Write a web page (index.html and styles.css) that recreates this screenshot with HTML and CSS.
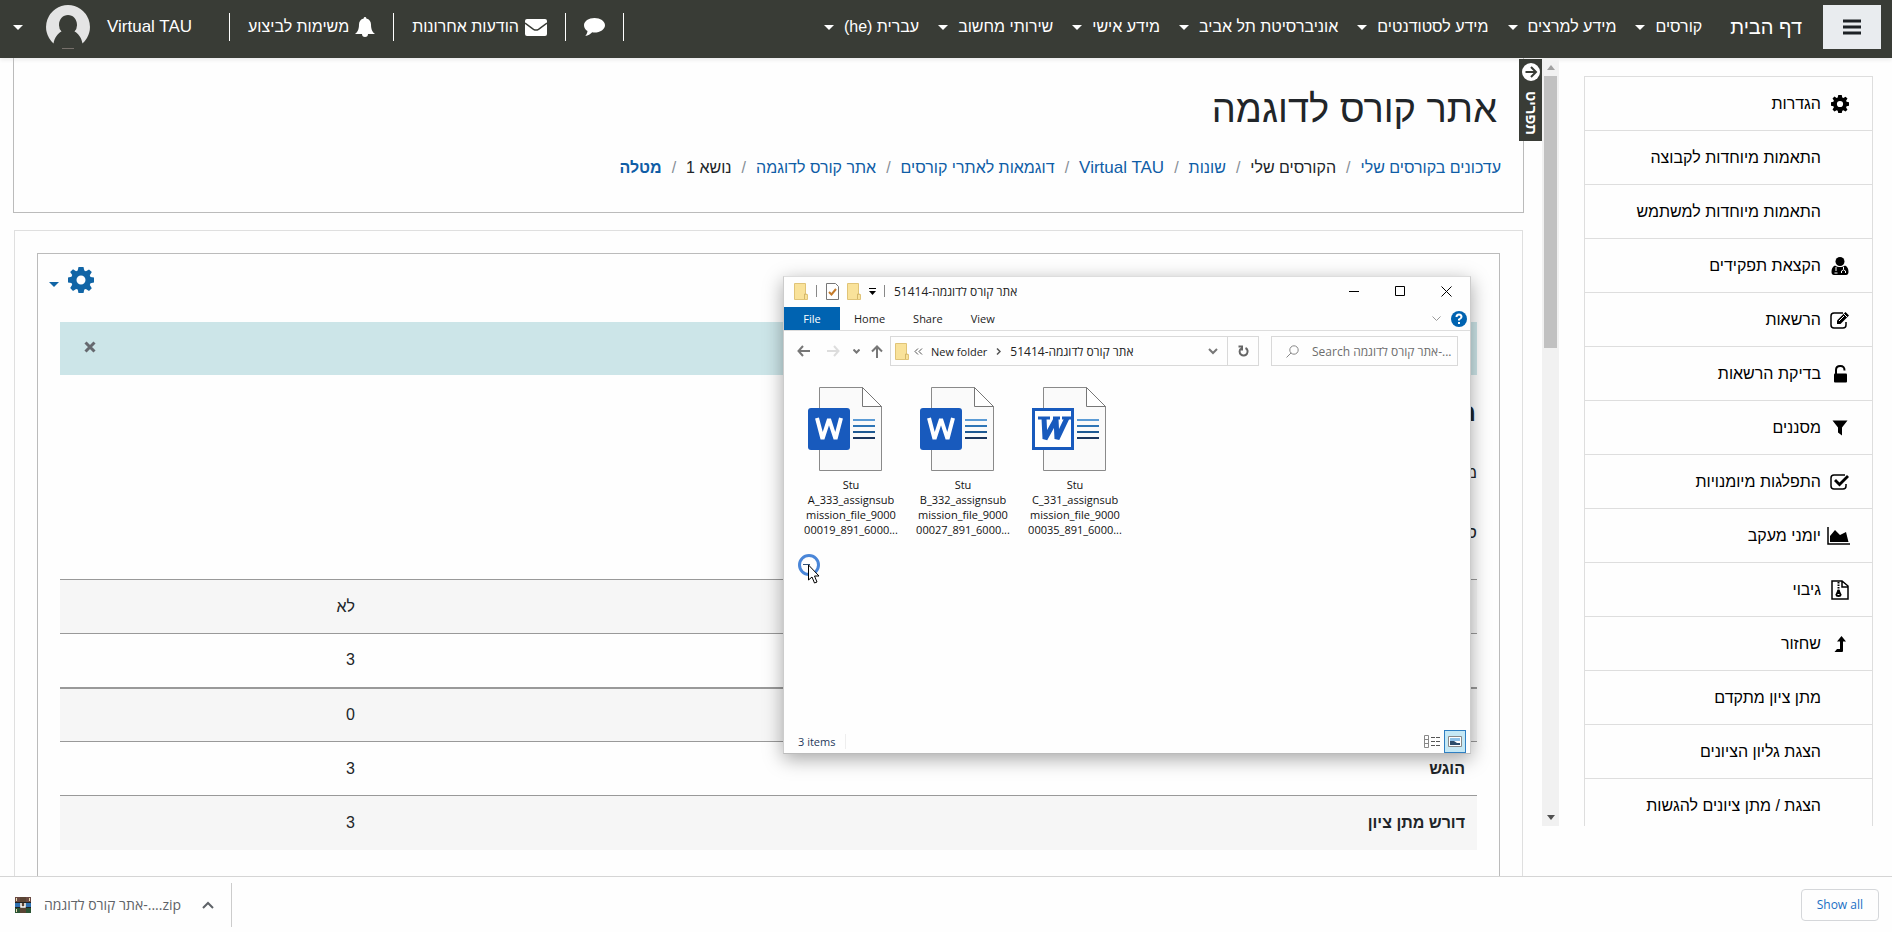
FILE: index.html
```
<!DOCTYPE html>
<html lang="he" dir="rtl">
<head>
    <meta charset="UTF-8">
    <meta name="viewport" content="width=device-width, initial-scale=1.0">
    <title>אתר קורס לדוגמה</title>
    <link rel="stylesheet" href="styles.css">
</head>
<body>
    <!-- Shared icons -->
    <svg class="sprite" aria-hidden="true">
        <symbol id="gear" viewBox="0 0 26 26">
            <path fill="currentColor" fill-rule="evenodd" d="M10.500 0h5l.8 3.600 1.600.7L21 2.400 23.800 5l-2 3.200.7 1.700 3.500.7v5l-3.500.7-.7 1.700 2 3.200-2.800 2.700-3.100-2-1.600.7-.8 3.600h-5l-.8-3.600-1.600-.7-3.100 2L2.200 21l2-3.200-.7-1.700L0 15.500v-5l3.500-.7.7-1.700-2-3.200L5 2.300l3.100 2 1.600-.7zM13 8.500a4.500 4.500 0 1 0 0 9 4.500 4.500 0 0 0 0-9z"/>
        </symbol>
        <symbol id="folder" viewBox="0 0 14 17">
            <path fill="#f9e29a" stroke="#e0c478" d="M.5.5h11v11h2v5H.5z"/>
            <path fill="none" stroke="#d4b76a" d="M10.500 16v-5h2"/>
        </symbol>
        <symbol id="word" viewBox="0 0 74 84">
            <path fill="#fafafa" stroke="#8a8a8a" d="M11.500.5h43l19 19v64h-62z"/>
            <path fill="#fff" stroke="#777" d="M54.500.5v19h19z"/>
            <path stroke="#5b9bd5" stroke-width="2" d="M45 33h22"/>
            <path stroke="#2e75b6" stroke-width="2" d="M45 39h22"/>
            <path stroke="#1f5a93" stroke-width="2" d="M45 45h22"/>
            <path stroke="#1b365d" stroke-width="2" d="M45 51h22"/>
        </symbol>
    </svg>

    <header class="navbar">
        <button class="menu-button" aria-label="תפריט צד">
            <svg width="18" height="16" viewBox="0 0 18 16"><path stroke="#1d2125" stroke-width="3" d="M0 2h18M0 8h18M0 14h18"/></svg>
        </button>
        <a class="home-link" href="#">דף הבית</a>
        <nav class="nav-links">
            <a href="#">קורסים</a>
            <a href="#">מידע למרצים</a>
            <a href="#">מידע לסטודנטים</a>
            <a href="#">אוניברסיטת תל אביב</a>
            <a href="#">מידע אישי</a>
            <a href="#">שירותי מחשוב</a>
            <a href="#">עברית (he)</a>
        </nav>
        <div class="user-tools">
            <a class="tool" href="#" aria-label="שיחות">
                <svg width="21" height="20" viewBox="0 0 21 18"><path fill="#fff" d="M10.500 0C16.300 0 21 3.200 21 7.200s-4.700 7.300-10.500 7.300c-.8 0-1.600 0-2.300-.2C6.500 16.200 4 17.600 1.300 18c1.400-1.500 2-3 2.200-4.900C1.300 11.700 0 9.600 0 7.200 0 3.200 4.700 0 10.500 0z"/></svg>
            </a>
            <a class="tool" href="#">
                <svg width="22" height="17" viewBox="0 0 22 17"><rect width="22" height="17" rx="2" fill="#fff"/><path fill="none" stroke="#393c36" stroke-width="1.500" d="M0 4l8.500 6.300q2.500 1.600 5 0L22 4"/></svg>
                הודעות אחרונות
            </a>
            <a class="tool" href="#">
                <svg width="20" height="20" viewBox="0 0 20 20"><path fill="#fff" d="M10 0c.8 0 1.300.6 1.300 1.400C14.500 2 16 4.600 16 7.500c0 5 1.500 7.500 4 9.500h-7a3 3 0 0 1-6 0H0c2.500-2 4-4.500 4-9.500 0-2.900 1.500-5.500 4.700-6.100C8.700.6 9.200 0 10 0z"/></svg>
                משימות לביצוע
            </a>
            <a class="user" href="#">
                <span class="latin">Virtual TAU</span>
                <svg width="44" height="44" viewBox="0 0 44 44">
                    <path fill="#e4e4e4" d="M22 0a22 22 0 0 1 14.500 38.500C35.500 33 32.500 28.500 28.500 26.500A9 9 0 0 0 31 20c0-6-4-10-9-10s-9 4-9 10a9 9 0 0 0 2.500 6.500c-4 2-7 6.500-8 12A22 22 0 0 1 22 0z"/>
                    <path stroke="#77706b" d="M16 43.500h12"/>
                </svg>
            </a>
        </div>
    </header>

    <div class="page">
        <aside class="sidebar">
            <ul class="side-list">
                <li><a href="#"><svg class="icon" viewBox="0 0 26 26"><use href="#gear"/></svg>הגדרות</a></li>
                <li><a href="#"><span class="icon"></span>התאמות מיוחדות לקבוצה</a></li>
                <li><a href="#"><span class="icon"></span>התאמות מיוחדות למשתמש</a></li>
                <li><a href="#"><svg class="icon" viewBox="0 0 18 18"><circle cx="9" cy="4.500" r="4.500"/><path d="M4 8.500C1.500 9.500.5 12 .5 15c0 2 1 3 2.500 3h12c1.500 0 2.500-1 2.500-3 0-3-1-5.500-3.500-6.500-3 2-7 2-10 0z"/><path fill="none" stroke="#fff" d="M5 10v4M3.500 16h3M12.500 10v2.500m-2 3.500v-2q2-2.500 4 0v2"/></svg>הקצאת תפקידים</a></li>
                <li><a href="#"><svg class="icon" viewBox="0 0 20 18"><path fill="none" stroke="#000" stroke-width="1.500" d="M13 2H4Q1 2 1 5v9q0 3 3 3h9q3 0 3-3v-3"/><path d="M7 13v-3.500L15.500 1 19 4.500 10.500 13z"/><path stroke="#fff" d="M14 3l3.500 3.500M9 10l5-5"/></svg>הרשאות</a></li>
                <li><a href="#"><svg class="icon" viewBox="0 0 18 18"><rect x="3" y="8.500" width="13" height="9" rx="1"/><path fill="none" stroke="#000" stroke-width="2" d="M5 9V5q0-4 4.300-4t4.200 4.500"/></svg>בדיקת הרשאות</a></li>
                <li><a href="#"><svg class="icon" viewBox="0 0 18 18"><path d="M1.500 1.500h15L11 8.500v8l-4-3v-5z"/></svg>מסננים</a></li>
                <li><a href="#"><svg class="icon" viewBox="0 0 20 18"><path fill="none" stroke="#000" stroke-width="1.500" d="M15 2H4Q1 2 1 5v8q0 3 3 3h9q3 0 3-3v-2"/><path d="M4 8l2-2 3.500 3.500 7.500-7.500 2 2-9.500 9.500z"/></svg>התפלגות מיומנויות</a></li>
                <li><a href="#"><svg class="icon wide" viewBox="0 0 23 18"><path fill="none" stroke="#000" stroke-width="1.500" d="M1 0v17h22"/><path d="M3 15V9l5-6 5 5 6-3 2.500 10z"/></svg>יומני מעקב</a></li>
                <li><a href="#"><svg class="icon tall" viewBox="0 0 18 20"><path fill="none" stroke="#000" stroke-width="1.500" d="M1 1h10l6 5v13H1zM11 1v6h6"/><path fill="none" stroke="#000" stroke-width="2" stroke-dasharray="1.500 1" d="M7.500 2v9"/><path d="M6.500 10h2l2 4.500q0 2.500-3 2.500t-3-2.500z"/><path stroke="#fff" d="M6.500 14.500h2"/></svg>גיבוי</a></li>
                <li><a href="#"><svg class="icon" viewBox="0 0 18 18"><path d="M10.500 1l4.500 5.500h-3V16q0 1-1 1H3.500l2.500-3h3V6.500H6z"/></svg>שחזור</a></li>
                <li><a href="#"><span class="icon"></span>מתן ציון מתקדם</a></li>
                <li><a href="#"><span class="icon"></span>הצגת גליון הציונים</a></li>
                <li><a href="#"><span class="icon"></span>הצגת / מתן ציונים להגשות</a></li>
            </ul>
            <div class="scrollbar">
                <svg width="8" height="5" viewBox="0 0 8 5"><path fill="#a0a0a0" d="M0 5l4-5 4 5z"/></svg>
                <div class="thumb"></div>
                <svg width="8" height="5" viewBox="0 0 8 5"><path fill="#505050" d="M0 0l4 5 4-5z"/></svg>
            </div>
            <button class="drawer-tab">
                <svg width="18" height="18" viewBox="0 0 18 18"><circle cx="9" cy="9" r="9" fill="#fff"/><path fill="none" stroke="#393c36" stroke-width="2" d="M3.500 9h10M9 4l5 5-5 5"/></svg>
                <span>תפריט</span>
            </button>
        </aside>

        <main class="content">
            <section class="course-header">
                <h1>אתר קורס לדוגמה</h1>
                <ol class="breadcrumb">
                    <li><a href="#">עדכונים בקורסים שלי</a></li>
                    <li>הקורסים שלי</li>
                    <li><a href="#">שונות</a></li>
                    <li><a class="latin" href="#">Virtual TAU</a></li>
                    <li><a href="#">דוגמאות לאתרי קורסים</a></li>
                    <li><a href="#">אתר קורס לדוגמה</a></li>
                    <li>נושא 1</li>
                    <li class="current"><a href="#">מטלה</a></li>
                </ol>
            </section>

            <section class="course-body">
                <div class="activity">
                    <button class="settings-button" aria-label="פעולות">
                        <svg width="26" height="26"><use href="#gear"/></svg>
                    </button>
                    <div class="alert">
                        <button class="alert-close" aria-label="סגירה">
                            <svg width="12" height="12" viewBox="0 0 12 12"><path stroke="#66696f" stroke-width="3" d="M1.500 1.500l9 9M10.500 1.500l-9 9"/></svg>
                        </button>
                    </div>
                    <h2>מטלה</h2>
                    <p>מטלה לדוגמה</p>
                    <h3>סיכום מתן הציונים</h3>
                    <table class="summary">
                        <tbody>
                            <tr><th scope="row">מוסתר מסטודנטים</th><td>לא</td></tr>
                            <tr class="group-end"><th scope="row">משתתפים</th><td>3</td></tr>
                            <tr><th scope="row">טיוטות</th><td>0</td></tr>
                            <tr><th scope="row">הוגש</th><td>3</td></tr>
                            <tr><th scope="row">דורש מתן ציון</th><td>3</td></tr>
                        </tbody>
                    </table>
                </div>
            </section>
        </main>
    </div>

    <!-- File explorer window over the page -->
    <section class="explorer" dir="ltr">
        <div class="title-bar">
            <svg width="14" height="17"><use href="#folder"/></svg>
            <span class="divider"></span>
            <svg width="13" height="17" viewBox="0 0 13 17"><path fill="#fff" stroke="#777" d="M.5.5h9l3 3v13H.5z"/><path fill="none" stroke="#c47b2b" stroke-width="2" d="M3 9l2.500 2.500L10 6"/></svg>
            <svg width="14" height="17"><use href="#folder"/></svg>
            <svg width="7" height="7" viewBox="0 0 7 7"><path d="M0 0h7v1H0zM0 3h7L3.500 7z"/></svg>
            <span class="divider"></span>
            <span class="window-title">51414-אתר קורס לדוגמה</span>
            <div class="window-buttons">
                <button aria-label="Minimize"><svg width="11" height="11"><path stroke="#000" d="M0 5.500h10"/></svg></button>
                <button aria-label="Maximize"><svg width="11" height="11"><path fill="none" stroke="#000" d="M.5.5h9v9h-9z"/></svg></button>
                <button aria-label="Close"><svg width="11" height="11"><path stroke="#000" d="M.5.5l10 10M10.500.5l-10 10"/></svg></button>
            </div>
        </div>
        <div class="ribbon">
            <button class="file-tab">File</button>
            <button>Home</button>
            <button>Share</button>
            <button>View</button>
            <svg class="ribbon-toggle" width="9" height="6" viewBox="0 0 9 6"><path fill="none" stroke="#999" d="M.5.5l4 4 4-4"/></svg>
            <svg width="16" height="16" viewBox="0 0 16 16"><circle cx="8" cy="8" r="8" fill="#0063b1"/><path fill="none" stroke="#fff" stroke-width="2" d="M5.500 6q0-2.500 2.500-2.500T10.500 6Q10.500 7 8 8.500v1M8 11v2"/></svg>
        </div>
        <div class="address-row">
            <button aria-label="Back"><svg width="13" height="12" viewBox="0 0 13 12"><path fill="none" stroke="#777" stroke-width="2" d="M13 6H1.500M6 1L1.500 6 6 11"/></svg></button>
            <button class="forward" aria-label="Forward"><svg width="13" height="12" viewBox="0 0 13 12"><path fill="none" stroke="#ddd" stroke-width="2" d="M0 6h11.500M7 1l4.500 5L7 11"/></svg></button>
            <button class="recent" aria-label="Recent locations"><svg width="7" height="5" viewBox="0 0 7 5"><path fill="none" stroke="#777" stroke-width="2" d="M.5.5l3 3 3-3"/></svg></button>
            <button class="up" aria-label="Up"><svg width="12" height="13" viewBox="0 0 12 13"><path fill="none" stroke="#777" stroke-width="2" d="M6 13V1.500M1 6.500l5-5 5 5"/></svg></button>
            <div class="address">
                <svg width="14" height="17"><use href="#folder"/></svg>
                <svg class="back-crumbs" width="9" height="7" viewBox="0 0 9 7"><path fill="none" stroke="#555" d="M4 .5l-3 3 3 3M8 .5l-3 3 3 3"/></svg>
                <span class="crumb">New folder</span>
                <svg class="crumb-arrow" width="5" height="7" viewBox="0 0 5 7"><path fill="none" stroke="#555" stroke-width="1.500" d="M1 .5l3 3-3 3"/></svg>
                <span>51414-אתר קורס לדוגמה</span>
                <svg class="address-open" width="10" height="7" viewBox="0 0 10 7"><path fill="none" stroke="#777" stroke-width="2" d="M1 1l4 4 4-4"/></svg>
            </div>
            <button class="refresh" aria-label="Refresh"><svg width="11" height="12" viewBox="0 0 11 12"><path fill="none" stroke="#666" stroke-width="2" d="M7.500 3a4 4 0 1 1-4.500.5M.5 1.500H4v4"/></svg></button>
            <label class="search">
                <svg width="13" height="13" viewBox="0 0 13 13"><circle cx="8" cy="5" r="4.200" fill="none" stroke="#888"/><path stroke="#888" d="M5 8l-4.500 4.500"/></svg>
                <input type="text" aria-label="Search" placeholder="Search אתר קורס לדוגמה-...">
            </label>
        </div>
        <div class="files">
            <figure class="file">
                <svg width="74" height="84" viewBox="0 0 74 84"><use href="#word"/><rect y="21" width="42" height="42" rx="3" fill="#185abd"/><path fill="none" stroke="#fff" stroke-width="4" stroke-linejoin="bevel" d="M9 31l5.500 21L21 32l6.500 20L33 31"/></svg>
                <figcaption>Stu<br>A_333_assignsub<br>mission_file_9000<br>00019_891_6000...</figcaption>
            </figure>
            <figure class="file">
                <svg width="74" height="84" viewBox="0 0 74 84"><use href="#word"/><rect y="21" width="42" height="42" rx="3" fill="#185abd"/><path fill="none" stroke="#fff" stroke-width="4" stroke-linejoin="bevel" d="M9 31l5.500 21L21 32l6.500 20L33 31"/></svg>
                <figcaption>Stu<br>B_332_assignsub<br>mission_file_9000<br>00027_891_6000...</figcaption>
            </figure>
            <figure class="file">
                <svg width="74" height="84" viewBox="0 0 74 84"><use href="#word"/><path fill="#fff" stroke="#185abd" stroke-width="3" d="M1.500 22.500h39v39h-39z"/><path fill="none" stroke="#185abd" stroke-width="5" stroke-linejoin="bevel" d="M12 31l1 21 11-20 1 20 10-21"/><path stroke="#185abd" stroke-width="3" d="M6 31h12M21 31h7M30 31h9"/></svg>
                <figcaption>Stu<br>C_331_assignsub<br>mission_file_9000<br>00035_891_6000...</figcaption>
            </figure>
        </div>
        <div class="status-bar">
            <span class="item-count">3 items</span>
            <button class="view-details" aria-label="Details view">
                <svg width="17" height="13" viewBox="0 0 17 13"><path fill="none" stroke="#888" d="M.5.5h4v12h-4zM.5 4.500h4M.5 8.500h4"/><path stroke="#555" stroke-dasharray="4 1" d="M7 2.500h10M7 6.500h10M7 10.500h10"/></svg>
            </button>
            <button class="view-icons" aria-label="Large icons view">
                <svg width="14" height="11" viewBox="0 0 14 11"><path fill="#fff" stroke="#888" d="M.5.5h13v10H.5z"/><path fill="#8ec1e8" d="M2 2h10v3H2z"/><path fill="#2d4d6b" d="M2 5h4l3 2h3v2H2z"/></svg>
            </button>
        </div>
        <svg class="cursor" width="24" height="32" viewBox="0 0 24 32">
            <circle cx="11" cy="11" r="9.500" fill="none" stroke="#4a86d8" stroke-width="3"/>
            <path stroke="#35547a" d="M5 10.500h7"/>
            <path fill="#fff" stroke="#000" d="M10.500 11v15l3.500-3 2.500 6 2.500-1-2.500-6H21z"/>
        </svg>
    </section>

    <footer class="downloads" dir="ltr">
        <button class="download-item">
            <svg width="16" height="16" viewBox="0 0 16 16">
                <path fill="#6b4a42" d="M0 0h16v5H0z"/><path fill="#2f72b3" d="M0 5h16v5H0z"/><path fill="#2b5434" d="M0 10h16v6H0z"/>
                <path fill="#5a4434" d="M5 0h6v16H5z"/><path fill="#222" d="M0 5h16v1H0zM0 10h16v1H0z"/><path fill="#e8d9b0" d="M1 1h1v3H1zM14 1h1v3h-1zM1 12h1v3H1z"/><path fill="none" stroke="#fff" stroke-width="1.500" d="M6 6v4h4V6"/>
            </svg>
            <span>אתר קורס לדוגמה-....zip</span>
            <svg class="download-menu" width="12" height="8" viewBox="0 0 12 8"><path fill="none" stroke="#5f6368" stroke-width="2" d="M1 7l5-5 5 5"/></svg>
        </button>
        <button class="show-all">Show all</button>
    </footer>
</body>
</html>
```
FILE: styles.css
```
* {
    box-sizing: border-box;
}

body {
    display: flex;
    flex-direction: column;
    height: 100vh;
    margin: 0;
    overflow: hidden;
    background-color: #fefefe;
    color: #212529;
    font-family: "Liberation Sans", Arial, sans-serif;
    font-size: 16px;
}

a {
    color: #0f5da6;
    text-decoration: none;
}

button {
    margin: 0;
    padding: 0;
    border: none;
    background: none;
    color: inherit;
    font: inherit;
    cursor: pointer;
}

svg {
    flex: none;
    display: block;
}

.sprite {
    position: absolute;
    width: 0;
    height: 0;
}

.latin {
    font-size: 17px;
}

/* Top bar */
.navbar {
    display: flex;
    flex: none;
    align-items: center;
    height: 58px;
    padding: 0 11px 4px 13px;
    background-color: #393c36;
    box-shadow: 0 2px 4px rgba(0, 0, 0, 0.08);
}

.navbar a {
    color: #fff;
    white-space: nowrap;
}

.menu-button {
    display: flex;
    align-items: center;
    justify-content: center;
    width: 58px;
    height: 44px;
    background-color: #e9ecef;
}

.home-link {
    margin-right: 21px;
    font-size: 20px;
}

.nav-links {
    display: flex;
    gap: 19px;
    margin-right: 28px;
}

.nav-links a {
    display: flex;
    align-items: center;
    gap: 10px;
}

.nav-links a::after,
.user::after,
.settings-button::after {
    content: "";
    border: 5px solid transparent;
    border-top-color: currentColor;
    border-bottom: none;
}

.user-tools {
    display: flex;
    align-items: center;
    margin-right: auto;
}

.tool {
    display: flex;
    align-items: center;
    gap: 6px;
    height: 28px;
    padding: 0 18px;
    border-right: 1px solid #fff;
}

.user {
    display: flex;
    align-items: center;
    gap: 17px;
    height: 28px;
    padding-right: 37px;
    border-right: 1px solid #fff;
}

.user::after {
    margin-right: 6px;
}

/* Page */
.page {
    display: flex;
    flex: 1;
    min-height: 0;
}

.sidebar {
    position: relative;
    display: flex;
    flex: none;
    align-items: stretch;
    width: 350px;
    margin-bottom: 50px;
}

.side-list {
    flex: 1;
    margin: 18px 19px 0 25px;
    padding: 0;
    overflow: hidden;
    border: 1px solid #dedede;
    border-bottom: none;
    list-style: none;
}

.side-list a {
    display: flex;
    align-items: center;
    gap: 9px;
    height: 54px;
    padding: 0 22px;
    border-bottom: 1px solid #dedede;
    color: #000;
}

.icon {
    flex: none;
    width: 20px;
    height: 18px;
}

.icon.wide {
    width: 23px;
    margin-left: -3px;
}

.icon.tall {
    height: 20px;
}

.scrollbar {
    display: flex;
    flex-direction: column;
    align-items: center;
    width: 17px;
    margin-top: 1px;
    padding: 6px 0;
    background-color: #f1f1f1;
}

.scrollbar svg:last-child {
    margin-top: auto;
}

.thumb {
    width: 13px;
    height: 36%;
    margin-top: 6px;
    background-color: #c1c1c1;
}

.drawer-tab {
    position: absolute;
    top: 1px;
    left: -23px;
    z-index: 2;
    display: flex;
    flex-direction: column;
    align-items: center;
    gap: 10px;
    width: 23px;
    height: 82px;
    padding-top: 4px;
    background-color: #393c36;
    color: #fff;
    font-size: 15px;
    font-weight: 700;
    line-height: 18px;
}

.drawer-tab span {
    writing-mode: vertical-rl;
    direction: ltr;
}

.content {
    display: flex;
    flex: 1;
    flex-direction: column;
    min-width: 0;
    padding: 0 18px 0 13px;
}

.course-header {
    flex: none;
    height: 155px;
    padding: 24px 22px 0;
    border: 1px solid #bbb;
    border-top: none;
}

h1 {
    margin: 0 4px 0 0;
    font-size: 38px;
    font-weight: 400;
    line-height: 54px;
}

.breadcrumb {
    display: flex;
    margin: 19px 0 0;
    padding: 0;
    line-height: 26px;
    list-style: none;
}

.breadcrumb li + li::before {
    content: "/";
    padding: 0 10px;
    color: #868e96;
    font-weight: 400;
}

.current {
    font-weight: 700;
}

.course-body {
    flex: 1;
    min-height: 0;
    margin: 17px 1px 0;
    padding: 22px 22px 0;
    overflow: hidden;
    border: 1px solid #dfdfdf;
    border-bottom: none;
}

.activity {
    height: 100%;
    padding: 13px 22px 0;
    border: 1px solid #bbb;
    border-bottom: none;
}

.settings-button {
    display: flex;
    align-items: center;
    gap: 9px;
    margin: 0 auto 29px -11px;
    color: #1165a6;
}

.settings-button::after {
    margin-top: 8px;
}

.alert {
    display: flex;
    align-items: center;
    justify-content: flex-end;
    height: 53px;
    padding: 0 24px;
    background-color: #cce5e8;
}

.alert-close {
    margin-bottom: 4px;
}

h2 {
    margin: 21px 1px 0;
    font-size: 25px;
    font-weight: 700;
    line-height: 32px;
}

.activity p {
    margin: 32px 0 0;
    line-height: 26px;
}

h3 {
    margin: 34px 0 33px;
    font-size: 17px;
    font-weight: 400;
    line-height: 26px;
}

.summary {
    width: 100%;
    border-collapse: collapse;
}

.summary tr {
    height: 54px;
    border-top: 1px solid #999;
}

.summary tr:nth-child(odd) {
    background-color: #f6f6f6;
}

.summary .group-end {
    border-bottom: 2px solid #999;
}

.summary th,
.summary td {
    padding: 0 12px;
    text-align: right;
}

.summary td {
    width: 307px;
}

/* File explorer */
.explorer {
    position: absolute;
    top: 276px;
    left: 783px;
    display: flex;
    flex-direction: column;
    width: 688px;
    height: 478px;
    border: 1px solid #ccc;
    border-color: #ddd #ccc #bbb;
    background-color: #fefefe;
    box-shadow: 0 5px 18px rgba(0, 0, 0, 0.35);
    color: #222;
    font-family: "Open Sans", "Noto Sans", "Liberation Sans", sans-serif;
    font-size: 11px;
}

.title-bar {
    display: flex;
    align-items: center;
    gap: 7px;
    height: 30px;
    padding: 0 0 2px 10px;
}

.title-bar svg {
    margin-right: 1px;
}

.divider {
    width: 1px;
    height: 12px;
    margin-right: 2px;
    background-color: #888;
}

.window-title {
    font-size: 12px;
}

.window-buttons {
    display: flex;
    align-self: stretch;
    margin-left: auto;
}

.window-buttons button {
    display: flex;
    align-items: center;
    justify-content: center;
    width: 46px;
}

.ribbon {
    display: flex;
    align-items: center;
    height: 24px;
    padding-right: 3px;
    border-bottom: 1px solid #ddd;
}

.ribbon button {
    height: 23px;
    padding: 0 14px;
}

.ribbon .file-tab {
    width: 56px;
    background-color: #0063b1;
    color: #fff;
}

.ribbon-toggle {
    margin: 0 10px 0 auto;
}

.address-row {
    display: flex;
    align-items: center;
    height: 40px;
    padding: 0 12px 0 13px;
    font-size: 12px;
}

.address-row button {
    margin-right: 17px;
}

.address-row .forward {
    margin-right: 13px;
}

.address-row .recent {
    margin-right: 11px;
}

.address-row .up {
    margin-right: 7px;
}

.address,
.address-row .refresh,
.search {
    display: flex;
    align-items: center;
    height: 30px;
    border: 1px solid #d9d9d9;
}

.address {
    flex: 1;
    padding: 0 9px 0 4px;
}

.crumb {
    font-size: 11px;
}

.back-crumbs {
    margin: 0 8px 0 5px;
}

.crumb-arrow {
    margin: 0 9px;
}

.address-open {
    margin-left: auto;
}

.address-row .refresh {
    justify-content: center;
    width: 31px;
    margin-right: 12px;
    border-left: none;
}

.search {
    width: 187px;
    gap: 13px;
    padding-left: 14px;
}

.search input {
    flex: 1;
    width: 0;
    padding: 0;
    border: none;
    outline: none;
    background: none;
    color: #666;
    font: inherit;
}

.search input::placeholder {
    color: #6d6d6d;
    opacity: 1;
}

.files {
    display: flex;
    flex: 1;
    padding: 16px 11px;
}

.file {
    width: 112px;
    margin: 0;
}

.file svg {
    margin-left: 13px;
}

.file figcaption {
    margin-top: 6px;
    color: #111;
    line-height: 15px;
    text-align: center;
}

.status-bar {
    display: flex;
    align-items: center;
    height: 24px;
    padding: 0 4px 0 14px;
    color: #1e395b;
}

.item-count {
    padding-right: 10px;
    border-right: 1px solid #eee;
}

.view-details {
    margin-left: auto;
}

.view-icons {
    display: flex;
    align-items: center;
    justify-content: center;
    width: 22px;
    height: 23px;
    margin-left: 3px;
    border: 1px solid #2f7fc2;
    background-color: #c5e8f5;
}

.cursor {
    position: absolute;
    top: 277px;
    left: 14px;
}

/* Downloads bar */
.downloads {
    z-index: 1;
    display: flex;
    flex: none;
    align-items: center;
    justify-content: space-between;
    height: 56px;
    padding: 0 13px 0 15px;
    border-top: 1px solid #d5d5d5;
    background-color: #fefefe;
    font-family: "Open Sans", "Noto Sans", "Liberation Sans", sans-serif;
    font-size: 12px;
}

.download-item {
    display: flex;
    align-items: center;
    gap: 13px;
    height: 44px;
    padding-right: 17px;
    border-right: 1px solid #ccc;
    color: #5f6368;
    font-size: 14px;
}

.download-menu {
    margin-left: 8px;
}

.show-all {
    height: 32px;
    padding: 0 15px;
    border: 1px solid #d5d7da;
    border-radius: 4px;
    color: #1a6fc4;
}
```
